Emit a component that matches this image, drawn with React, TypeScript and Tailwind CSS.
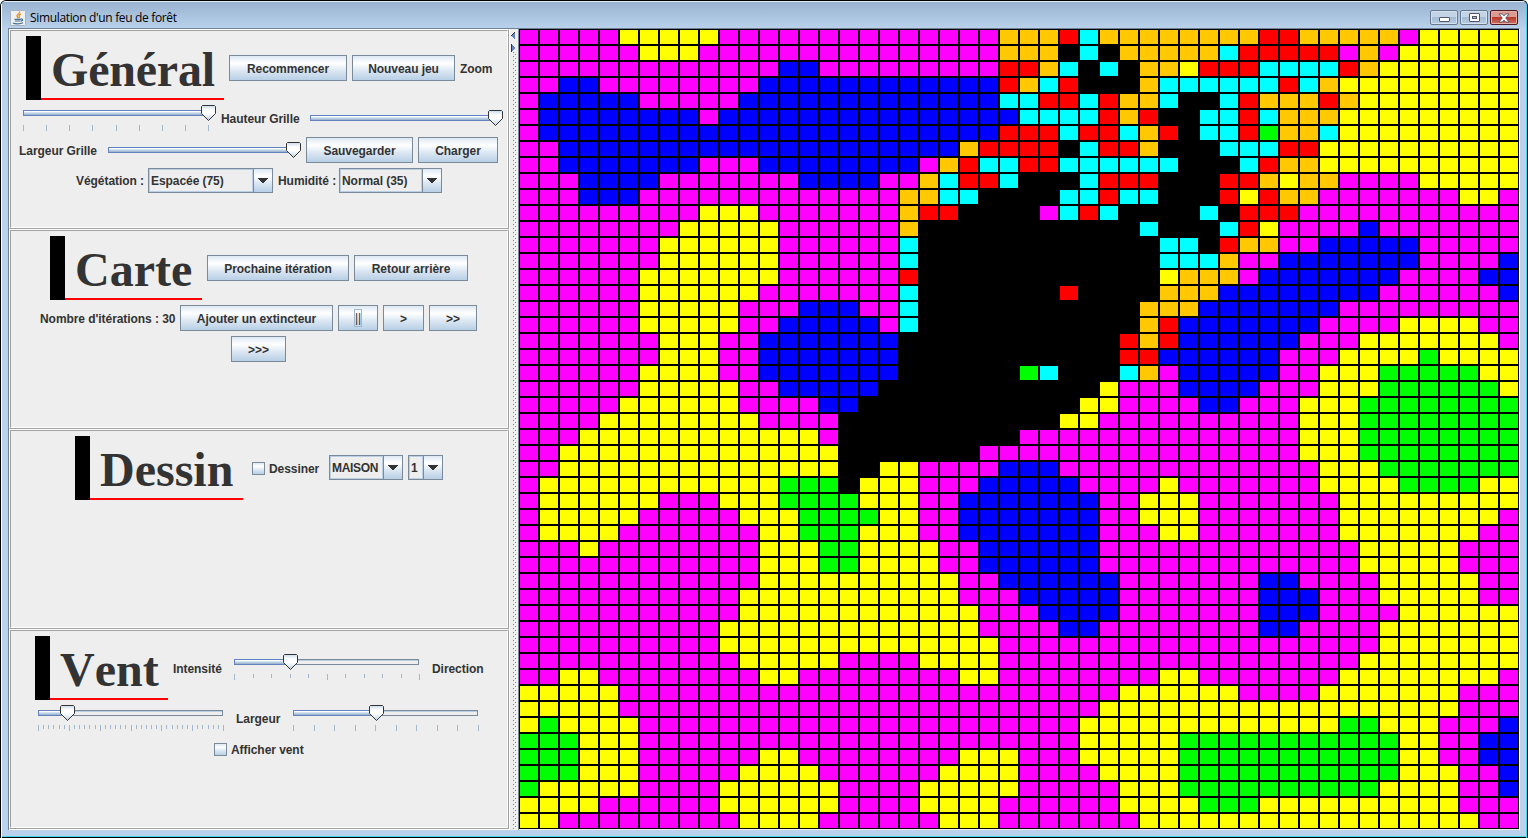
import React from "react";

const COLORS: Record<string, string> = {
  m: "bg-[#ff00ff]",
  y: "bg-[#ffff00]",
  b: "bg-[#0000ff]",
  o: "bg-[#ffc800]",
  r: "bg-[#ff0000]",
  c: "bg-[#00ffff]",
  g: "bg-[#00ff00]",
  k: "bg-black",
};

// Run-length encoded terrain, one string per row of 50 cells.
const TERRAIN = [
  "5m5y7m 7m3o1r1c5o 3o2r5o1m5y",
  "6m3y8m 7m3o1k1c1k4o 1o1c5r1m1o1m6y",
  "13m2b2m 7m2r1o1c1k1c1k2o1y 3r4c1r1o7y",
  "2m2b8m5b 7b1r1o1c1r3k1o2c 4c1r1c1o9y",
  "1m5b5m6b 7b2c2r1c1r2o1c1k 1k1c1r3o1r1o8y",
  "1m8b1m7b 8b4c1r1o1r2k 2c1r1c3o9y",
  "1m16b 7b3r1c2r1c1o1r1k 2c1r1g2o1c9y",
  "2m15b 5b1o4r1k1c2r1o2k 1k3c2r10y",
  "2m7b3m5b 3b1m1o1r2c2r6c1k 2k1c1r2o10y",
  "3m4b7m3b 1b2m1o1c2r1c3k1c3r2k 1k2r1o1y2o4m5y",
  "3m3b11m 2m2o2c4k2c1r2c2k 1k1r1y1r2o7m2y1m",
  "9m3y5m 2m1o2r4k1m1c1r1c4k 1c1k3r11m",
  "8m5y4m 2m1o11k1c2k 1k1c1r1y4m1b7m",
  "7m6y4m 2m1c12k2c 1k1r2o2m5b5m",
  "7m6y4m 2m1c12k2c 1c1o2m7b4m1b",
  "6m7y4m 2m1r12k1y1o 2o1m7b4m2b",
  "6m6y5m 2m1c7k1r4k2o 1o8b6m1b",
  "6m5y3m3b 2m1c11k3o 7b9m",
  "6m5y2m4b 1b1m1c11k1o1r1b 6b4m4y2m",
  "7m3y2m5b 2b11k1r1o1r1b 5b3m7y1m",
  "7m3y2m5b 2b11k2r2b 4b3m4y1g4y",
  "6m4y2m5b 2b6k1g1c3k1c1o1m1b 4b2m3y5g2y",
  "6m5y2m4b 1b11k1y3m1b 3b3m3y6g1y",
  "5m6y4m2b 11k2y4m 2b3m3y8g",
  "4m8y4m1k 10k2y5m 5m3y8g",
  "3m12y1m1k 8k9m 5m3y8g",
  "2m14y1k 6k11m 5m3y8g",
  "2m14y1k 1k2y4m3b7m 6m3y7g",
  "1m12y3g1k 3y3m5b4m1y1m 6m4y4g2y",
  "1m6y3m3y4g 3y2m7b2m3y 7m9y",
  "1m5y5m3y3g 1g2y2m7b2m3y 7m8y1m",
  "1m4y7m2y3g 3y2m7b3m2y 7m7y2m",
  "3m1y8m3y2g 4y2m6b5m 8m5y3m",
  "12m3y2g 4y2m6b5m 8m5y3m",
  "12m5y 5y2m6b4m 3m2b4m5y2m",
  "11m6y 5y3m5b4m 3m3b3m5y2m",
  "11m6y 6y3m4b4m 3m3b4m6y",
  "10m7y 6y4m2b5m 3m2b4m7y",
  "10m7y 7y10m 9m7y",
  "11m5y1m 3m4y10m 8m8y",
  "2m2y8m2y3m 5m2y8m2y 7m8y1m",
  "5y12m 13m4y 2y4m7y3m",
  "5y12m 12m5y 13y3m",
  "1y1g4y11m 11m6y 7y2g3y3m1b",
  "3g3y11m 11m5y1g 10g2y2m2b",
  "3g3y6m2y3m 5m3y3m5y1g 10g2y2m2b",
  "3g3y5m4y2m 4m4y4m4y1g 10g3y2m1b",
  "1g5y4m6y1m 3m5y5m3y1g 9g4y2m1b",
  "4y6m6y1m 3m4y6m4y 3g10y3m",
  "2y9m4y2m 4m3y7m3y 14y2m",
];

function expand(row: string): string {
  return row.replace(/ /g, "").replace(/(\d+)([a-z])/g, (_, n, c) => c.repeat(Number(n)));
}

function Forest() {
  return (
    <div className="grid h-[800px] w-[1000px] grid-cols-[repeat(50,20px)] auto-rows-[16px] bg-black">
      {TERRAIN.map((row, y) =>
        expand(row)
          .split("")
          .map((c, x) => <div key={`${y}-${x}`} className={`m-px ${COLORS[c]}`} />)
      )}
    </div>
  );
}

const OCEAN = "bg-[linear-gradient(to_bottom,#dde8f3_0%,#ffffff_30%,#dde8f3_60%,#b8cfe5_100%)]";

function Section({ children }: { children: React.ReactNode }) {
  return (
    <section className="h-[200px] w-[500px] border border-b-[#a0a0a0] border-l-white border-r-[#a0a0a0] border-t-white">
      <div className="flex h-full flex-col gap-[5px] border border-b-white border-l-[#a0a0a0] border-r-white border-t-[#a0a0a0] pt-[5px]">
        {children}
      </div>
    </section>
  );
}

function Row({ className = "", children }: { className?: string; children: React.ReactNode }) {
  return <div className={`flex shrink-0 items-center justify-center gap-[5px] ${className}`}>{children}</div>;
}

function Title({ className, children }: { className: string; children: string }) {
  return (
    <h2 className={`flex h-[64px] shrink-0 ${className}`}>
      <span className="w-[15px] bg-black" />
      <span className="h-[64px] flex-1 border-b-2 border-[#ff0000] pl-[10px] font-['Liberation_Serif',serif] text-[48px] font-bold leading-[68px] [font-kerning:none]">
        {children}
      </span>
    </h2>
  );
}

function Label({ className, children }: { className: string; children: string }) {
  return <span className={`shrink-0 whitespace-nowrap pt-[2px] leading-[16px] ${className}`}>{children}</span>;
}

function Button({ className, focused, children }: { className: string; focused?: boolean; children: string }) {
  return (
    <button
      className={`flex h-[26px] shrink-0 items-center justify-center border border-[#7a8a99] whitespace-nowrap leading-[16px] ${OCEAN} ${className}`}
    >
      {focused ? (
        <span className="h-[18px] w-[8px] border border-[#a3b8cc] text-center font-normal leading-[17px]">{children}</span>
      ) : (
        <span className="pt-[2px]">{children}</span>
      )}
    </button>
  );
}

function Combo({ className, children }: { className: string; children: string }) {
  return (
    <div className={`flex h-[25px] shrink-0 border border-[#7a8a99] ${className}`}>
      <div className="flex-1 border border-[#b8cfe5] pl-px leading-[22px] whitespace-nowrap">{children}</div>
      <div className={`flex w-[19px] items-center justify-center border-l border-[#7a8a99] ${OCEAN}`}>
        <svg width="10" height="5" viewBox="0 0 10 5" shapeRendering="crispEdges">
          <path d="M0 0h10v1h-1v1h-1v1h-1v1h-1v1h-2v-1h-1v-1h-1v-1h-1v-1h-1z" fill="#333" />
        </svg>
      </div>
    </div>
  );
}

function Check({ className, children }: { className: string; children: string }) {
  return (
    <label className={`flex h-[25px] shrink-0 items-start gap-[4px] pl-[4px] pt-[6px] ${className}`}>
      <span className={`h-[13px] w-[13px] border border-[#7a8a99] ${OCEAN}`} />
      <span className="whitespace-nowrap leading-[14px]">{children}</span>
    </label>
  );
}

interface SliderProps {
  value: number;
  steps?: number;
  major?: number;
  className?: string;
}

// value is the thumb centre in pixels from the left end of the 185px track.
function Slider({ value, steps = 0, major = 1, className = "" }: SliderProps) {
  const ticks = steps ? Array.from({ length: steps + 1 }, (_, i) => i) : [];
  return (
    <div className={`relative w-[200px] shrink-0 pt-[5px] ${steps ? "h-[27px]" : "h-[16px]"} ${className}`}>
      <div className="ml-[7px] h-[6px] w-[185px] border border-[#7a8a99] bg-[linear-gradient(to_bottom,#b8cfe5_25%,#eeeeee_25%)]">
        <div
          className="-ml-px -mt-px h-[6px] border border-[#6382bf] bg-[linear-gradient(to_bottom,#ffffff_25%,#d5e2f0_25%,#d5e2f0_50%,#b8cfe5_50%,#b8cfe5_75%,#a3b8cc_75%)]"
          style={{ width: value }}
        />
      </div>
      <svg className="absolute top-0" style={{ left: value }} width="15" height="16" viewBox="0 0 15 16">
        <defs>
          <linearGradient id="thumb" x1="0" y1="0" x2="0" y2="1">
            <stop offset="0" stopColor="#c8daec" />
            <stop offset="0.3" stopColor="#ffffff" />
            <stop offset="0.55" stopColor="#ffffff" />
            <stop offset="1" stopColor="#b8cfe5" />
          </linearGradient>
        </defs>
        <path d="M1.5 0.5H13.5L14.5 1.5V8.5L7.5 15.5L0.5 8.5V1.5Z" fill="url(#thumb)" stroke="#333" />
      </svg>
      {steps > 0 && (
        <svg className="mt-[9px] block" width="200" height="6" shapeRendering="crispEdges">
          {ticks.map((i) => (
            <rect
              key={i}
              x={7 + Math.round((i * 185) / steps)}
              y="0"
              width="1"
              height={i % major === 0 ? 6 : 4}
              fill="#a3b8cc"
            />
          ))}
        </svg>
      )}
    </div>
  );
}

function JavaIcon() {
  return (
    <svg width="16" height="16" viewBox="0 0 16 16" fill="none">
      <rect x="0.5" y="0.5" width="15" height="15" rx="1" fill="#eef1f4" stroke="#a9b3bd" />
      <path d="M9.600 1.500C10.300 3.400 6.400 4.300 7 6.200C7.200 7 8 7.300 8 8.300M10.900 4.200C9.200 4.800 8.500 5.600 9.200 6.500C9.600 7.100 9.300 7.700 8.800 8.200" stroke="#ef8a1d" strokeWidth="1.3" />
      <path d="M4.500 9.300H11M5 11H10.400M3 13C5 14.200 10.500 14.200 13 12.800M11 9C13.400 8.700 13 10.800 10.800 11.200" stroke="#47708f" strokeWidth="1.2" />
    </svg>
  );
}

function TitleBar() {
  return (
    <header className="flex h-[27px] items-start justify-between bg-[linear-gradient(to_bottom,#99b3d1,#bad2eb)] pl-[8px] pr-[8px]">
      <div className="flex items-center gap-[4px] pt-[8px]">
        <JavaIcon />
        <span className="whitespace-nowrap font-['Open_Sans',sans-serif] text-[12px] leading-[16px] tracking-[-0.34px] text-black">
          Simulation d'un feu de forêt
        </span>
      </div>
      <div className="flex gap-[2px] pt-[8px]">
        <div className="flex h-[15px] w-[28px] items-end justify-center rounded-[2px] border border-[#66788e] bg-[linear-gradient(to_bottom,#c3d4e7_50%,#a5bcd6_50%,#b8cde4)] pb-[2px] shadow-[inset_0_0_0_1px_#d4e1ef]">
          <span className="h-[5px] w-[11px] rounded-[1px] border border-[#535666] bg-white" />
        </div>
        <div className="flex h-[15px] w-[28px] items-center justify-center rounded-[2px] border border-[#66788e] bg-[linear-gradient(to_bottom,#c3d4e7_50%,#a5bcd6_50%,#b8cde4)] shadow-[inset_0_0_0_1px_#d4e1ef]">
          <span className="flex h-[9px] w-[11px] items-center justify-center rounded-[1px] border border-[#535666] bg-white">
            <span className="h-[3px] w-[5px] border border-[#535666] bg-[#a5bcd6]" />
          </span>
        </div>
        <div className="flex h-[15px] w-[28px] items-center justify-center rounded-[2px] border border-[#4d1a22] bg-[linear-gradient(to_bottom,#dc9a90_50%,#b93a2c_50%,#cf7160)] shadow-[inset_0_0_0_1px_#e5aea5]">
          <svg width="12" height="10" viewBox="0 0 13 11">
            <path d="M1 1h3.6l1.900 2.200L8.400 1H12L8.400 5.500L12 10H8.400L6.500 7.800L4.600 10H1L4.600 5.500Z" fill="#fff" stroke="#535666" />
          </svg>
        </div>
      </div>
    </header>
  );
}

function Divider() {
  return (
    <div className="flex w-[9px] flex-col border-r border-[#7a8a99]">
      <svg className="mt-[3px] block shrink-0" width="8" height="20" viewBox="0 0 8 20" shapeRendering="crispEdges">
        <path d="M5 0v8l-4 -4z" fill="#6382bf" />
        <path d="M5 0l-4 4" stroke="#333" />
        <path d="M1 12v8l4 -4z" fill="#6382bf" />
        <path d="M1.500 12v8" stroke="#333" />
      </svg>
      <svg className="ml-[3px] block w-[4px] flex-1" shapeRendering="crispEdges">
        <defs>
          <pattern id="bumps" width="4" height="4" patternUnits="userSpaceOnUse">
            <rect x="0" y="0" width="1" height="1" fill="#808080" />
            <rect x="1" y="1" width="1" height="1" fill="#fff" />
            <rect x="2" y="2" width="1" height="1" fill="#808080" />
            <rect x="3" y="3" width="1" height="1" fill="#fff" />
          </pattern>
        </defs>
        <rect width="4" height="100%" fill="url(#bumps)" />
      </svg>
    </div>
  );
}

export default function App() {
  return (
    <div className="flex h-[838px] w-[1528px] flex-col overflow-hidden rounded-t-[6px] border-x border-t border-black bg-[#bad2eb] font-['Liberation_Sans',Arial,sans-serif] text-[12px] font-bold tracking-[-0.06px] text-[#333333]">
      <div className="flex flex-1 flex-col border-l border-r border-t border-l-white border-r-[#3fd6f0] border-t-[#dfeaf5]">
        <div className="font-normal">
          <TitleBar />
        </div>
        <div className="mx-[6px] -mt-px flex h-[802px] w-[1512px] border-l border-r border-t border-[#6f8299] border-r-white bg-[#eeeeee]">
          <div className="flex w-[501px] flex-col border-b border-r border-white">
            <Section>
              <Row>
                <Title className="w-[198px] tracking-[-0.2px]">Général</Title>
                <Button className="w-[118px]">Recommencer</Button>
                <Button className="w-[103px]">Nouveau jeu</Button>
                <Label className="w-[32px]">Zoom</Label>
              </Row>
              <Row className="h-[27px] pl-px">
                <Slider value={185} steps={8} />
                <Label className="mb-px w-[77px]">Hauteur Grille</Label>
                <Slider value={185} className="mb-px" />
              </Row>
              <Row className="h-[26px] pr-px">
                <Label className="w-[77px]">Largeur Grille</Label>
                <Slider value={185} />
                <Button className="w-[107px]">Sauvegarder</Button>
                <Button className="w-[80px]">Charger</Button>
              </Row>
              <Row className="h-[25px]">
                <Label className="mb-px w-[67px]">Végétation :</Label>
                <Combo className="w-[125px]">Espacée (75)</Combo>
                <Label className="mb-px w-[56px]">Humidité :</Label>
                <Combo className="w-[103px]">Normal (35)</Combo>
              </Row>
            </Section>
            <Section>
              <Row>
                <Title className="w-[152px] tracking-normal">Carte</Title>
                <Button className="w-[142px]">Prochaine itération</Button>
                <Button className="w-[114px]">Retour arrière</Button>
              </Row>
              <Row className="pr-px">
                <Label className="w-[135px]">Nombre d'itérations : 30</Label>
                <Button className="w-[153px]">Ajouter un extincteur</Button>
                <Button className="w-[40px]" focused>
                  ||
                </Button>
                <Button className="w-[41px]">&gt;</Button>
                <Button className="w-[48px]">&gt;&gt;</Button>
              </Row>
              <Row className="pr-px">
                <Button className="w-[55px]">&gt;&gt;&gt;</Button>
              </Row>
            </Section>
            <Section>
              <Row>
                <Title className="w-[168px] tracking-normal">Dessin</Title>
                <Check className="mt-px w-[76px]">Dessiner</Check>
                <Combo className="mb-px w-[74px] tracking-[-0.3px]">MAISON</Combo>
                <Combo className="mb-px w-[35px]">1</Combo>
              </Row>
            </Section>
            <Section>
              <Row>
                <Title className="w-[133px] tracking-normal">Vent</Title>
                <Label className="w-[49px]">Intensité</Label>
                <Slider value={56} steps={10} major={5} className="mb-px" />
                <Label className="w-[51px]">Direction</Label>
              </Row>
              <Row className="h-[27px] pr-px">
                <Slider value={29} steps={36} major={6} />
                <Label className="mb-px w-[45px]">Largeur</Label>
                <Slider value={83} steps={9} />
              </Row>
              <Row className="pr-px">
                <Check className="w-[97px]">Afficher vent</Check>
              </Row>
            </Section>
          </div>
          <Divider />
          <Forest />
        </div>
        <div className="mt-auto h-[2px] border-b border-black bg-[#3fd6f0]" />
      </div>
    </div>
  );
}
